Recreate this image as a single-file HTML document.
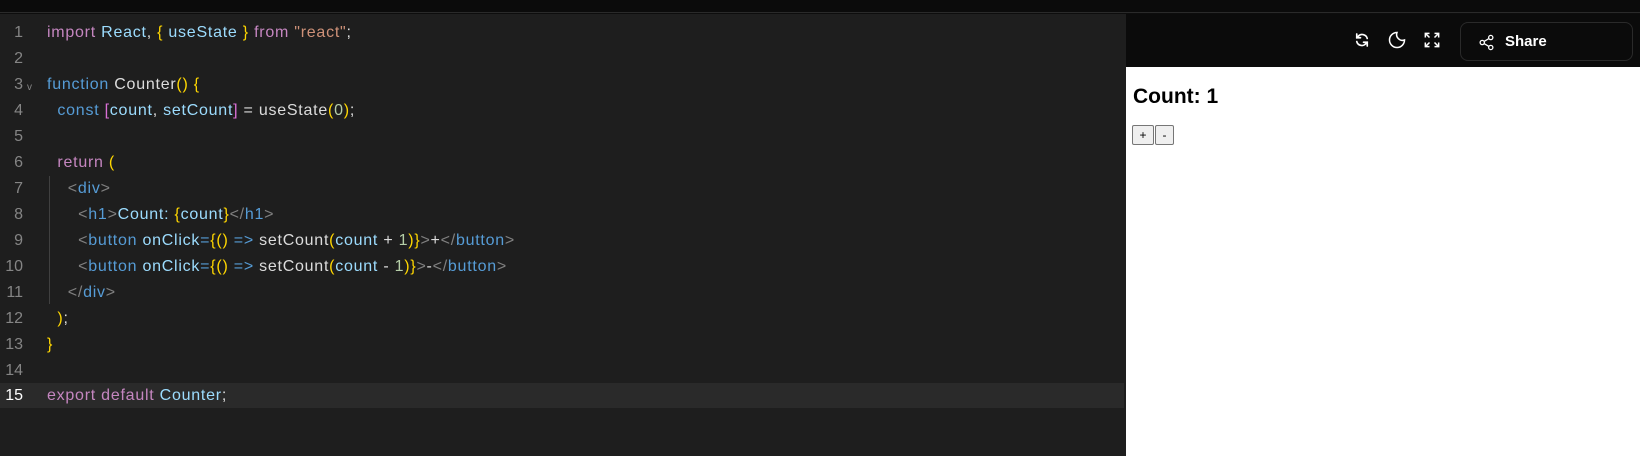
<!DOCTYPE html>
<html><head><meta charset="utf-8"><style>
*{margin:0;padding:0;box-sizing:border-box}
body{width:1640px;height:456px;background:#0d0d0d;position:relative;overflow:hidden;font-family:"Liberation Sans",sans-serif}
#top{position:absolute;left:0;top:0;width:1640px;height:13px;background:#0b0b0b;border-bottom:1px solid #2a2a2a}
#ed{position:absolute;left:0;top:14px;width:1124px;height:442px;background:#1e1e1e}
.ln{position:absolute;left:0;height:26px;width:1124px;font-size:16px;letter-spacing:0.75px;line-height:26px;white-space:pre;color:#d4d4d4}
.ln .n{position:absolute;left:0;width:23px;text-align:right;color:#858585;letter-spacing:0}
.ln .c{position:absolute;left:47px}
.hl{background:#2a2a2a}
.hl .n{color:#fff}
.k{color:#c586c0}.b{color:#569cd6}.v{color:#9cdcfe}.y{color:#ffd700}.s{color:#ce9178}.w{color:#dcdcdc}.g{color:#808080}.p{color:#da70d6}.m{color:#b5cea8}
#guide{position:absolute;left:49px;top:176px;width:1px;height:128px;background:#404040}
#rp{position:absolute;left:1124px;top:14px;width:516px;height:442px;border-left:2px solid #1e1e1e}
#hdr{position:absolute;left:0;top:0;width:514px;height:53px;background:#0b0b0b}
#body{position:absolute;left:0;top:53px;width:514px;height:389px;background:#fff}
h1{position:absolute;left:7px;top:18px;font-size:21px;font-weight:bold;color:#000}
.btn{position:absolute;top:58px;height:20px;border:1px solid #767676;border-radius:2px;background:#efefef;font-size:12px;text-align:center;line-height:18px;color:#000}
#share{position:absolute;left:334px;top:8px;width:173px;height:39px;border:1px solid #2a2a2a;border-radius:8px;color:#fff;font-weight:bold;font-size:15px}
</style></head><body>
<div id="top"></div>
<div id="ed">
<div class="ln" style="top:6px"><span class="n">1</span><span class="c"><span class="k">import</span> <span class="v">React</span><span class="w">,</span> <span class="y">{</span> <span class="v">useState</span> <span class="y">}</span> <span class="k">from</span> <span class="s">"react"</span><span class="w">;</span></span></div>
<div class="ln" style="top:32px"><span class="n">2</span></div>
<div class="ln" style="top:58px"><span class="n">3</span><span style="position:absolute;left:27px;top:3px;font-size:10px;color:#858585">v</span><span class="c"><span class="b">function</span> <span class="w">Counter</span><span class="y">() {</span></span></div>
<div class="ln" style="top:84px"><span class="n">4</span><span class="c">  <span class="b">const</span> <span class="p">[</span><span class="v">count</span><span class="w">,</span> <span class="v">setCount</span><span class="p">]</span> <span class="w">= useState</span><span class="y">(</span><span class="m">0</span><span class="y">)</span><span class="w">;</span></span></div>
<div class="ln" style="top:110px"><span class="n">5</span></div>
<div class="ln" style="top:136px"><span class="n">6</span><span class="c">  <span class="k">return</span> <span class="y">(</span></span></div>
<div class="ln" style="top:162px"><span class="n">7</span><span class="c">    <span class="g">&lt;</span><span class="b">div</span><span class="g">&gt;</span></span></div>
<div class="ln" style="top:188px"><span class="n">8</span><span class="c">      <span class="g">&lt;</span><span class="b">h1</span><span class="g">&gt;</span><span class="v">Count: </span><span class="y">{</span><span class="v">count</span><span class="y">}</span><span class="g">&lt;/</span><span class="b">h1</span><span class="g">&gt;</span></span></div>
<div class="ln" style="top:214px"><span class="n">9</span><span class="c">      <span class="g">&lt;</span><span class="b">button</span> <span class="v">onClick</span><span class="b">=</span><span class="y">{()</span> <span class="b">=&gt;</span> <span class="w">setCount</span><span class="y">(</span><span class="v">count</span> <span class="w">+</span> <span class="m">1</span><span class="y">)}</span><span class="g">&gt;</span><span class="w">+</span><span class="g">&lt;/</span><span class="b">button</span><span class="g">&gt;</span></span></div>
<div class="ln" style="top:240px"><span class="n">10</span><span class="c">      <span class="g">&lt;</span><span class="b">button</span> <span class="v">onClick</span><span class="b">=</span><span class="y">{()</span> <span class="b">=&gt;</span> <span class="w">setCount</span><span class="y">(</span><span class="v">count</span> <span class="w">-</span> <span class="m">1</span><span class="y">)}</span><span class="g">&gt;</span><span class="w">-</span><span class="g">&lt;/</span><span class="b">button</span><span class="g">&gt;</span></span></div>
<div class="ln" style="top:266px"><span class="n">11</span><span class="c">    <span class="g">&lt;/</span><span class="b">div</span><span class="g">&gt;</span></span></div>
<div class="ln" style="top:292px"><span class="n">12</span><span class="c">  <span class="y">)</span><span class="w">;</span></span></div>
<div class="ln" style="top:318px"><span class="n">13</span><span class="c"><span class="y">}</span></span></div>
<div class="ln" style="top:344px"><span class="n">14</span></div>
<div class="ln hl" style="top:369px;height:25px"><span class="n">15</span><span class="c"><span class="k">export</span> <span class="k">default</span> <span class="v">Counter</span><span class="w">;</span></span></div>
</div>
<div id="guide"></div>
<div id="rp">
<div id="hdr">
<svg style="position:absolute;left:227px;top:17px" width="18" height="18" viewBox="0 0 24 24" fill="none" stroke="#fff" stroke-width="2.2" stroke-linecap="round"><path d="M19 10a7 7 0 0 0-12-3L5 9M5 14a7 7 0 0 0 12 3l2-2"/><path d="M5 4v5h5M19 20v-5h-5"/></svg>
<svg style="position:absolute;left:261px;top:16px" width="20" height="20" viewBox="0 0 24 24" fill="none" stroke="#fff" stroke-width="1.8"><path d="M12 3a9 9 0 1 0 9 9 7 7 0 0 1-9-9z"/></svg>
<svg style="position:absolute;left:296px;top:16px" width="20" height="20" viewBox="0 0 24 24" fill="none" stroke="#fff" stroke-width="1.8"><path d="M4 9V4h5M4 4l5 5M20 9V4h-5M20 4l-5 5M4 15v5h5M4 20l5-5M20 15v5h-5M20 20l-5-5"/></svg>
<div id="share">
<svg style="position:absolute;left:17px;top:11px" width="17" height="17" viewBox="0 0 24 24" fill="none" stroke="#fff" stroke-width="1.8"><circle cx="18" cy="5" r="3"/><circle cx="6" cy="12" r="3"/><circle cx="18" cy="19" r="3"/><path d="M8.6 13.5l6.8 4M15.4 6.5l-6.8 4"/></svg>
<span style="position:absolute;left:44px;top:10px">Share</span>
</div>
</div>
<div id="body">
<h1>Count: 1</h1>
<div class="btn" style="left:6px;width:22px">+</div>
<div class="btn" style="left:29px;width:19px">-</div>
</div>
</div>
</body></html>
